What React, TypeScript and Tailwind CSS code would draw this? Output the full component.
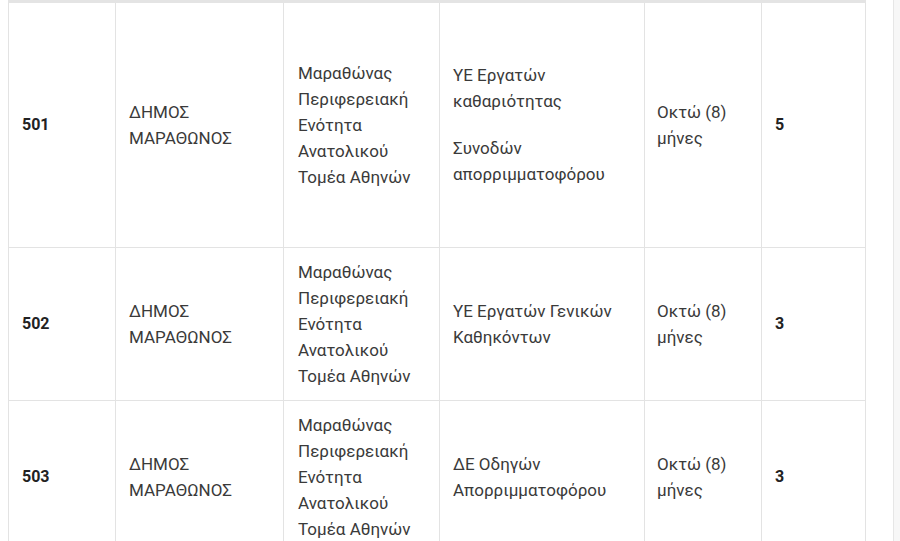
const rows = [
  {
    id: "501",
    height: "h-[244px]",
    specialty: [["ΥΕ Εργατών", "καθαριότητας"], ["Συνοδών", "απορριμματοφόρου"]],
    count: "5",
  },
  {
    id: "502",
    height: "h-[153px]",
    specialty: [["ΥΕ Εργατών Γενικών", "Καθηκόντων"]],
    count: "3",
  },
  {
    id: "503",
    height: "h-[153px]",
    specialty: [["ΔΕ Οδηγών", "Απορριμματοφόρου"]],
    count: "3",
  },
];

export default function App() {
  return (
    <div className="flex h-[541px] w-[900px] overflow-hidden bg-white font-['Roboto',_'Noto_Sans',sans-serif] text-[17px] leading-[26px] text-[#3a3a3a]">
      <div className="flex-1 pl-2 pr-[27px]">
        <div className="h-[3px] w-full bg-[#e4e4e4]" />
        <table className="w-[857px] table-fixed border-collapse">
          <colgroup>
            <col className="w-[107px]" />
            <col className="w-[168px]" />
            <col className="w-[156px]" />
            <col className="w-[205px]" />
            <col className="w-[117px]" />
            <col className="w-[104px]" />
          </colgroup>
          <tbody>
            {rows.map((row) => (
              <tr key={row.id} className={`${row.height} border-b border-[#e3e3e3]`}>
                <td className="border-x border-[#e3e3e3] px-[13px] align-middle text-[16px] font-bold text-[#222]">
                  {row.id}
                </td>
                <td className="border-x border-[#e3e3e3] px-[13px] align-middle">
                  ΔΗΜΟΣ
                  <br />
                  ΜΑΡΑΘΩΝΟΣ
                </td>
                <td className="border-x border-[#e3e3e3] px-[14px] align-middle">
                  Μαραθώνας
                  <br />
                  Περιφερειακή
                  <br />
                  Ενότητα
                  <br />
                  Ανατολικού
                  <br />
                  Τομέα Αθηνών
                </td>
                <td className="border-x border-[#e3e3e3] px-[13px] align-middle">
                  <div className="flex flex-col gap-[21px]">
                    {row.specialty.map((lines, i) => (
                      <p key={i}>
                        {lines[0]}
                        <br />
                        {lines[1]}
                      </p>
                    ))}
                  </div>
                </td>
                <td className="border-x border-[#e3e3e3] px-[12px] align-middle">
                  Οκτώ (8)
                  <br />
                  μήνες
                </td>
                <td className="border-x border-[#e3e3e3] px-[13px] align-middle text-[16px] font-bold text-[#222]">
                  {row.count}
                </td>
              </tr>
            ))}
          </tbody>
        </table>
      </div>
      <div className="w-[8px] border-l border-[#e6e6e6] bg-[#f7f7f7]" />
    </div>
  );
}
